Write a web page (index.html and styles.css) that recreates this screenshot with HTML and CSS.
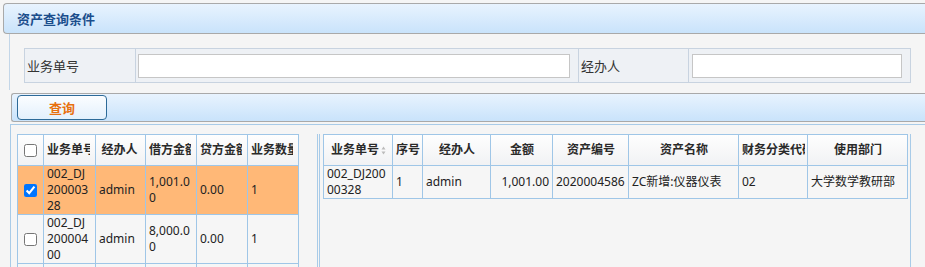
FILE: index.html
```html
<!DOCTYPE html>
<html lang="zh">
<head>
<meta charset="utf-8">
<title>资产查询</title>
<link rel="stylesheet" href="styles.css">
</head>
<body>
<div class="panel-title"><span>资产查询条件</span></div>
<div class="form-area">
  <table class="cond">
    <tr>
      <td class="lbl c1">业务单号</td>
      <td class="c2"><input class="in1" type="text"></td>
      <td class="lbl c3">经办人</td>
      <td class="c4"><input class="in2" type="text"></td>
    </tr>
  </table>
</div>
<div class="toolbar"><button class="btn">查询</button></div>
<div class="lower">
  <div class="left-box">
    <table class="grid lgrid">
      <thead>
        <tr>
          <th class="w-ck"><input type="checkbox" class="ck"></th>
          <th class="w52"><div class="hc">业务单号</div></th>
          <th class="w50"><div class="hc">经办人</div></th>
          <th class="w51"><div class="hc">借方金额</div></th>
          <th class="w51"><div class="hc">贷方金额</div></th>
          <th class="w51"><div class="hc">业务数量</div></th>
        </tr>
      </thead>
      <tbody>
        <tr class="sel">
          <td class="ckc"><input type="checkbox" class="ck" checked></td>
          <td>002_DJ20000328</td>
          <td>admin</td>
          <td>1,001.00</td>
          <td>0.00</td>
          <td>1</td>
        </tr>
        <tr>
          <td class="ckc"><input type="checkbox" class="ck"></td>
          <td>002_DJ20000400</td>
          <td>admin</td>
          <td>8,000.00</td>
          <td>0.00</td>
          <td>1</td>
        </tr>
        <tr>
          <td class="ckc"><input type="checkbox" class="ck"></td>
          <td>002_DJ20000412</td>
          <td>admin</td>
          <td>2,000.00</td>
          <td>0.00</td>
          <td>1</td>
        </tr>
      </tbody>
    </table>
  </div>
  <div class="splitter"></div>
  <div class="right-box">
    <table class="grid rgrid">
      <thead>
        <tr>
          <th class="r1"><div class="hc">业务单号<svg class="sort" width="5" height="9" viewBox="0 0 5 9"><path d="M2.5 0.5 L4.5 3.5 L0.5 3.5Z M2.5 8.5 L4.5 5.5 L0.5 5.5Z" fill="#bbb"/></svg></div></th>
          <th class="r2"><div class="hc">序号</div></th>
          <th class="r3"><div class="hc">经办人</div></th>
          <th class="r4"><div class="hc">金额</div></th>
          <th class="r5"><div class="hc">资产编号</div></th>
          <th class="r6"><div class="hc">资产名称</div></th>
          <th class="r7"><div class="hc">财务分类代码</div></th>
          <th class="r8"><div class="hc">使用部门</div></th>
        </tr>
      </thead>
      <tbody>
        <tr>
          <td>002_DJ20000328</td>
          <td>1</td>
          <td>admin</td>
          <td class="num">1,001.00</td>
          <td>2020004586</td>
          <td>ZC新增:仪器仪表</td>
          <td>02</td>
          <td>大学数学教研部</td>
        </tr>
      </tbody>
    </table>
  </div>
</div>
</body>
</html>
```

FILE: styles.css
```css
* { box-sizing: border-box; }
html, body { margin: 0; padding: 0; }
body {
  background: #f5f5f5;
  font-family: "Noto Sans", "Noto Sans CJK SC", sans-serif;
  font-size: 12px;
  color: #222;
  overflow: hidden;
  height: 267px;
}

.panel-title {
  margin: 3px 0 0 3px;
  height: 31px;
  border: 1px solid #a9a9a9;
  border-right: 0;
  border-radius: 4px 0 0 4px;
  background: linear-gradient(#e8f3fe, #c9e3fb);
  padding-left: 13px;
  display: flex;
  align-items: center;
}
.panel-title span {
  font-weight: bold;
  font-size: 13px;
  color: #1b4e8c;
}

.form-area {
  margin-left: 9px;
  border-left: 1px solid #c3d6e8;
  height: 56px;
  padding: 14px 0 0 14px;
}
.cond {
  border-collapse: collapse;
  table-layout: fixed;
  width: 886px;
}
.cond td {
  border: 1px solid #c8d3e0;
  background: #eef1f5;
  height: 34px;
  padding: 0;
  font-size: 13px;
  color: #333;
}
.cond .lbl { padding-left: 2px; }
.cond .c1 { width: 111px; }
.cond .c2 { width: 443px; }
.cond .c3 { width: 110px; }
.cond .c4 { width: 222px; }
.cond input {
  display: block;
  height: 24px;
  border: 1px solid #c6c6c6;
  background: #fff;
  padding: 0 3px;
  outline: none;
}
.cond .in1 { width: 432px; margin-left: 2px; }
.cond .in2 { width: 210px; margin-left: 3px; }

.toolbar {
  margin: 3px 0 0 11px;
  height: 29px;
  border: 1px solid #a9a9a9;
  border-right: 0;
  border-radius: 3px 0 0 3px;
  background: linear-gradient(#e8f3fe, #c9e3fb);
  padding: 1px 0 0 5px;
}
.btn {
  display: block;
  width: 90px;
  height: 25px;
  border: 1px solid #2d6a98;
  border-radius: 4px;
  background: linear-gradient(#fbfdff, #e3f0fc);
  color: #e8700e;
  font-family: "Noto Sans", "Noto Sans CJK SC", sans-serif;
  font-weight: bold;
  font-size: 13px;
  padding: 0;
  line-height: 22px;
}

.lower {
  margin: 2px 0 0 10px;
  border-top: 1px solid #a8cbe8;
  border-left: 1px solid #a8cbe8;
  padding: 9px 0 0 6px;
  display: flex;
  height: 150px;
}
.left-box {
  width: 301px;
  border-right: 1px solid #a8cbe8;
}
.splitter {
  margin-left: 1px;
  width: 4px;
  border-left: 1px solid #a8cbe8;
}
.right-box {
  width: 588px;
  border-right: 1px solid #a8cbe8;
}

.grid {
  border-collapse: separate;
  border-spacing: 0;
  table-layout: fixed;
  border-left: 1px solid #9fc6e7;
  border-top: 1px solid #9fc6e7;
}
.grid th, .grid td {
  border-right: 1px solid #9fc6e7;
  border-bottom: 1px solid #9fc6e7;
  padding: 0 5px 0 3px;
  overflow: hidden;
  line-height: 16px;
  vertical-align: middle;
  word-break: break-all;
}
.grid th {
  height: 31px;
  background: linear-gradient(#fefefe, #f1f2f4);
  font-weight: bold;
  color: #2a2a2a;
  text-align: center;
  white-space: nowrap;
  word-break: normal;
}
.hc {
  overflow: hidden;
  white-space: nowrap;
}
.grid td {
  text-align: left;
  background: #f6f6f6;
  color: #222;
}
.lgrid { width: 282px; }
.lgrid td { height: 49px; }
.lgrid .w-ck { width: 26px; padding: 0; }
.lgrid .w52 { width: 52px; }
.lgrid .w50 { width: 50px; }
.lgrid .w51 { width: 51px; }
.lgrid .ckc { padding: 0; text-align: center; }
.ck {
  display: block;
  width: 13px;
  height: 13px;
  margin: 0 auto;
}
.lgrid tr.sel td { background: #ffb877; }

.rgrid { width: 585px; }
.rgrid th, .rgrid td { padding: 0 2px 0 3px; }
.rgrid td { height: 33px; }
.rgrid .r1 { width: 69px; }
.rgrid .r2 { width: 30px; }
.rgrid .r3 { width: 68px; }
.rgrid .r4 { width: 62px; }
.rgrid .r5 { width: 76px; }
.rgrid .r6 { width: 110px; }
.rgrid .r7 { width: 69px; }
.rgrid .r8 { width: 100px; }
.rgrid td.num { text-align: right; padding-right: 3px; }
.sort { margin-left: 2px; vertical-align: -1px; }
```
